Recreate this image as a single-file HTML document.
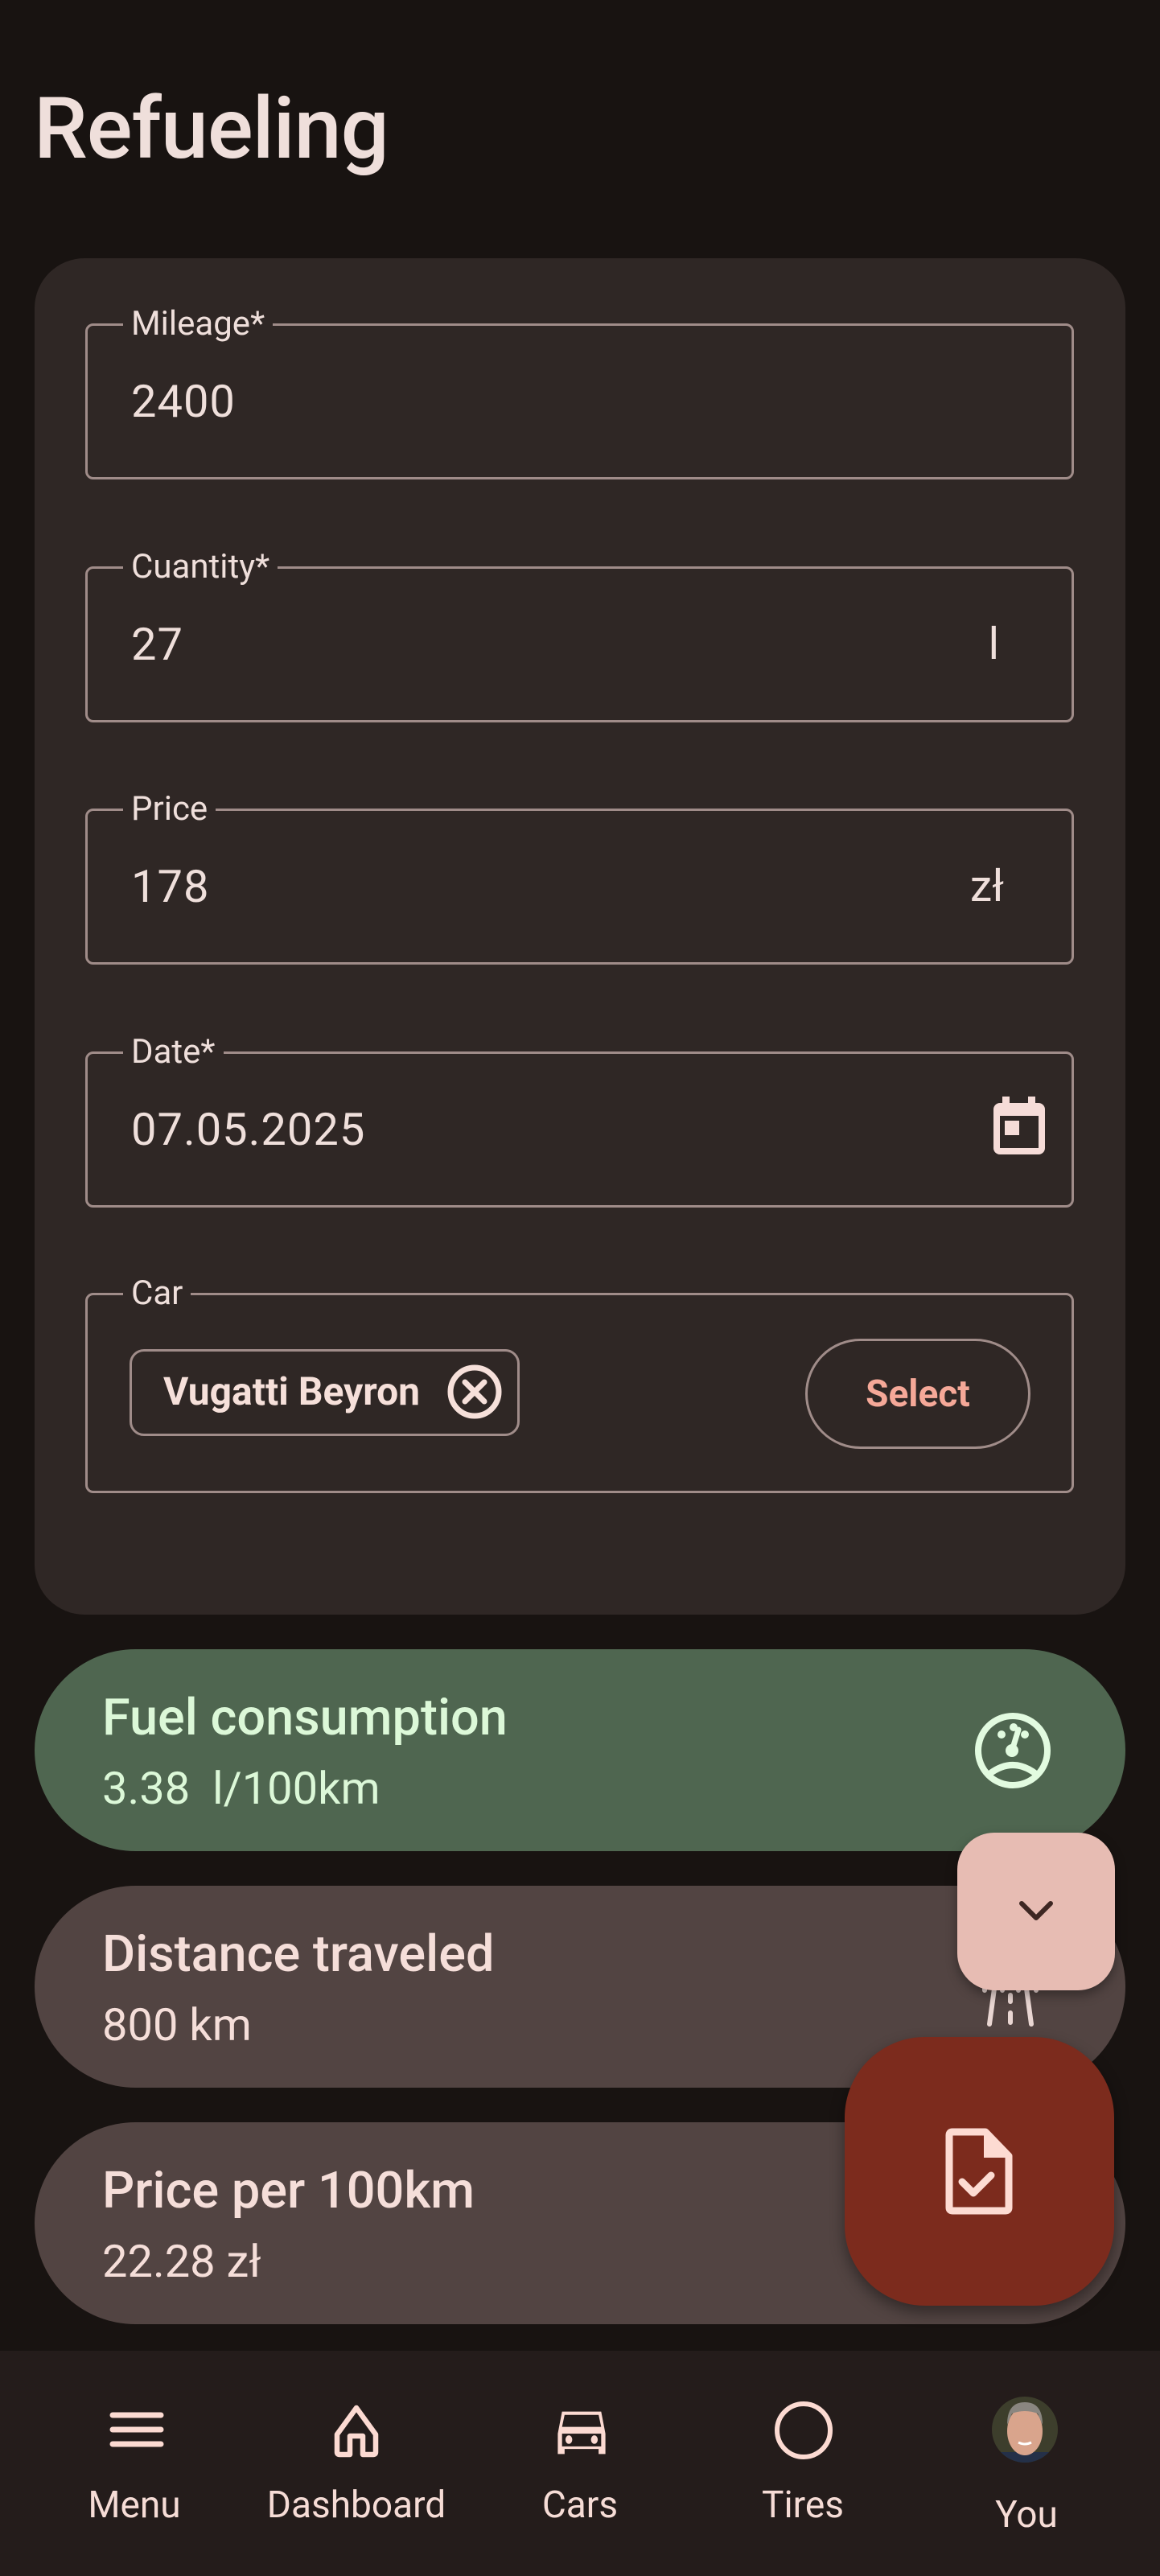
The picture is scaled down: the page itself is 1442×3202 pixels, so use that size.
<!DOCTYPE html>
<html><head><meta charset="utf-8"><style>
*{margin:0;padding:0;box-sizing:border-box}
body{width:1442px;height:3202px;background:#181311;font-family:"Roboto","Liberation Sans",sans-serif;color:#f1dfdb;position:relative;overflow:hidden}
.a{position:absolute}
.title{left:42px;top:100px;font-size:106px;line-height:120px;font-weight:500;color:#efdfdb;letter-spacing:-1px}
.card{left:43px;top:321px;width:1356px;height:1686px;background:#2f2725;border-radius:62px}
.field{left:106px;width:1229px;height:194px;border:3px solid #a08c89;border-radius:10px}
.lbl{position:absolute;left:44px;top:-27px;background:#2f2725;padding:0 10px;font-size:42px;line-height:50px;color:#efdfdb}
.val{position:absolute;left:54px;top:0;height:100%;display:flex;align-items:center;font-size:56px;color:#efdfdb;letter-spacing:1px}
.suf{position:absolute;right:80px;top:0;height:100%;display:flex;align-items:center;font-size:55px;color:#efdfdb}
.stat{left:43px;width:1356px;height:251px;border-radius:126px}
.st{position:absolute;left:84px;top:46px;font-size:63px;font-weight:500;line-height:80px}
.sv{position:absolute;left:84px;top:138px;font-size:56px;line-height:70px}
.nav{left:0;top:2922px;width:1442px;height:280px;background:#241c1b}
.nl{position:absolute;top:3084px;font-size:46px;line-height:60px;color:#f6dcd6;text-align:center;width:260px}
</style></head><body>
<div class="a title">Refueling</div>
<div class="a card"></div>

<div class="a field" style="top:402px"><div class="lbl">Mileage*</div><div class="val">2400</div></div>
<div class="a field" style="top:704px"><div class="lbl">Cuantity*</div><div class="val">27</div><div class="suf" style="right:90px">l</div></div>
<div class="a field" style="top:1005px"><div class="lbl">Price</div><div class="val">178</div><div class="suf" style="right:84px">zł</div></div>
<div class="a field" style="top:1307px"><div class="lbl">Date*</div><div class="val">07.05.2025</div></div>
<svg class="a" style="left:1230px;top:1360px" width="74" height="78" viewBox="0 0 74 78"><rect x="16" y="3" width="9" height="14" fill="#f6dcd8"/><rect x="48" y="3" width="9" height="14" fill="#f6dcd8"/><rect x="5" y="11" width="64" height="64" rx="8" fill="#f6dcd8"/><rect x="13" y="27" width="48" height="40" fill="#2f2725"/><rect x="19" y="33" width="18" height="18" fill="#f6dcd8"/></svg>

<div class="a field" style="top:1607px;height:249px"><div class="lbl">Car</div></div>
<div class="a" style="left:161px;top:1677px;width:485px;height:108px;border:3px solid #a08c89;border-radius:18px"></div>
<div class="a" style="left:203px;top:1700px;font-size:48px;font-weight:700;line-height:60px;color:#f6e0da">Vugatti Beyron</div>
<svg class="a" style="left:553px;top:1693px" width="74" height="74" viewBox="0 0 74 74"><circle cx="37" cy="37" r="30" fill="none" stroke="#f6e0da" stroke-width="7"/><path d="M25 25L49 49M49 25L25 49" stroke="#f6e0da" stroke-width="7" stroke-linecap="round"/></svg>
<div class="a" style="left:1001px;top:1664px;width:280px;height:137px;border:3px solid #a08c89;border-radius:70px;display:flex;align-items:center;justify-content:center;font-size:46px;font-weight:700;color:#f5a898">Select</div>

<div class="a stat" style="top:2050px;background:#4f6650;color:#dcf8d8"><div class="st">Fuel consumption</div><div class="sv">3.38&nbsp; l/100km</div></div>
<svg class="a" style="left:1208px;top:2125px" width="102" height="102" viewBox="0 0 102 102"><circle cx="51" cy="51" r="43" fill="none" stroke="#e2fbe0" stroke-width="8"/><path d="M22 80Q51 58 80 80" fill="none" stroke="#e2fbe0" stroke-width="8"/><circle cx="37" cy="31" r="5" fill="#e2fbe0"/><circle cx="52" cy="22" r="5" fill="#e2fbe0"/><circle cx="66" cy="31" r="5" fill="#e2fbe0"/><circle cx="50" cy="51" r="8" fill="#e2fbe0"/><path d="M50 51L58 25" stroke="#e2fbe0" stroke-width="7" stroke-linecap="round"/></svg>

<div class="a stat" style="top:2344px;background:#524442;color:#f5ded9"><div class="st">Distance traveled</div><div class="sv">800 km</div></div>
<svg class="a" style="left:1216px;top:2466px" width="80" height="56" viewBox="0 0 80 56"><path d="M20 6L14 50M60 6L66 50" stroke="#e9d6d2" stroke-width="6" stroke-linecap="round"/><path d="M40 14V22M40 36V48" stroke="#e9d6d2" stroke-width="6" stroke-linecap="round"/><path d="M8 4V8M30 4V8M50 4V8M72 4V8" stroke="#e9d6d2" stroke-width="6" stroke-linecap="round"/></svg>

<div class="a stat" style="top:2638px;background:#524442;color:#f5ded9"><div class="st">Price per 100km</div><div class="sv">22.28 zł</div></div>

<div class="a" style="left:1190px;top:2278px;width:196px;height:196px;border-radius:46px;background:#e7bcb3;box-shadow:0 6px 14px rgba(0,0,0,.35)"></div>
<svg class="a" style="left:1258px;top:2346px" width="60" height="60" viewBox="0 0 60 60"><path d="M12 20L30 38L48 20" fill="none" stroke="#3e2723" stroke-width="6" stroke-linecap="round" stroke-linejoin="round"/></svg>

<div class="a" style="left:1050px;top:2532px;width:335px;height:334px;border-radius:100px;background:#7c2b1d;box-shadow:0 8px 18px rgba(0,0,0,.4)"></div>
<svg class="a" style="left:1170px;top:2640px" width="96" height="118" viewBox="0 0 96 118"><path d="M14 10H55L84 40V104Q84 108 80 108H14Q10 108 10 104V14Q10 10 14 10Z" fill="none" stroke="#fddbd2" stroke-width="9" stroke-linejoin="round"/><path d="M53 10V42H84Z" fill="#fddbd2"/><path d="M26 72L40 86L62 64" fill="none" stroke="#fddbd2" stroke-width="9" stroke-linecap="round" stroke-linejoin="round"/></svg>

<div class="a nav"></div>
<svg class="a" style="left:136px;top:2996px" width="68" height="48" viewBox="0 0 68 48"><path d="M4 6H64M4 24H64M4 42H64" stroke="#fcdad2" stroke-width="7" stroke-linecap="round"/></svg>
<svg class="a" style="left:410px;top:2988px" width="66" height="68" viewBox="0 0 66 68"><path d="M33 5L9 38V60Q9 63 12 63H25V40H41V63H54Q57 63 57 60V38Z" fill="none" stroke="#fcdad2" stroke-width="6.5" stroke-linejoin="round"/></svg>
<svg class="a" style="left:686px;top:2990px" width="74" height="68" viewBox="0 0 70 62"><path d="M12 6H58L63 32V56H55V50H15V56H7V32Z" fill="#fcdad2"/><path d="M15 10H55L58 24H12Z" fill="#241c1b"/><rect x="12" y="32" width="46" height="15" fill="#241c1b"/><ellipse cx="20" cy="39" rx="4" ry="5" fill="#fcdad2"/><ellipse cx="50" cy="39" rx="4" ry="5" fill="#fcdad2"/></svg>
<svg class="a" style="left:960px;top:2982px" width="78" height="78" viewBox="0 0 78 78"><circle cx="39" cy="39" r="33" fill="none" stroke="#fcdad2" stroke-width="6"/></svg>
<svg class="a" style="left:1232px;top:2978px" width="84" height="84" viewBox="0 0 84 84"><defs><clipPath id="c"><circle cx="42" cy="42" r="41"/></clipPath></defs><g clip-path="url(#c)"><rect width="84" height="84" fill="#3d3e2c"/><rect x="0" y="70" width="84" height="20" fill="#243048"/><ellipse cx="42" cy="44" rx="22" ry="30" fill="#d9a48c"/><path d="M20 36Q20 8 42 8Q64 8 64 36L58 22Q42 16 26 22Z" fill="#8a8680"/><path d="M34 58Q42 62 50 58" stroke="#fff" stroke-width="3" fill="none"/></g></svg>
<div class="nl" style="left:37px">Menu</div>
<div class="nl" style="left:313px">Dashboard</div>
<div class="nl" style="left:591px">Cars</div>
<div class="nl" style="left:868px">Tires</div>
<div class="nl" style="left:1146px;top:3096px">You</div>
</body></html>
